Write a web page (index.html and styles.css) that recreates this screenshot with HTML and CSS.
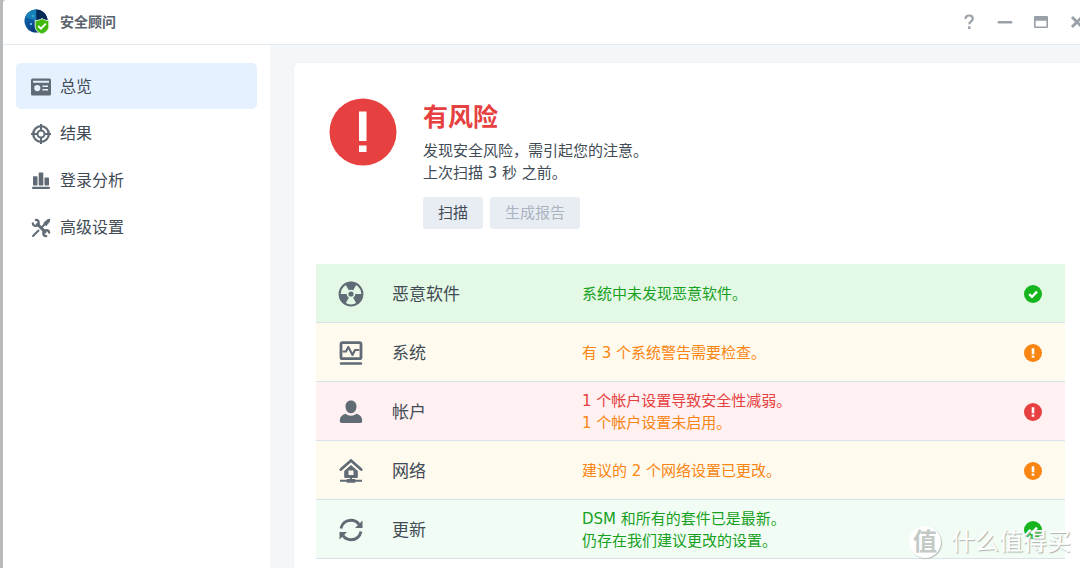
FILE: index.html
```html
<!DOCTYPE html>
<html lang="zh-CN">
<head>
<meta charset="utf-8">
<meta name="viewport" content="width=device-width, initial-scale=1">
<title>安全顾问</title>
<link rel="stylesheet" href="styles.css">
</head>
<body>
<svg class="defs" aria-hidden="true">
  <symbol id="ok" viewBox="0 0 18 18"><circle cx="9" cy="9" r="9" fill="#17b51d"/><path d="M5.2 9.2 8 11.8l5-5.2" fill="none" stroke="#fff" stroke-width="2.4"/></symbol>
  <symbol id="alert" viewBox="0 0 18 18"><circle cx="9" cy="9" r="9" fill="currentColor"/><path d="M7.7 4.3h2.6v6H7.7zM7.7 11.4h2.6v2.3H7.7z" fill="#fff"/></symbol>
</svg>
<div class="window">
  <header class="titlebar">
    <svg class="logo" viewBox="0 0 26 26" aria-hidden="true">
      <defs><linearGradient id="globe" x1="0" y1="0" x2="1" y2="1"><stop offset="0" stop-color="#0f6fb0"/><stop offset=".45" stop-color="#0b4f96"/><stop offset="1" stop-color="#041b45"/></linearGradient></defs>
      <circle cx="12" cy="12" r="11.5" fill="url(#globe)"/>
      <path d="M12 .5a11.5 11.5 0 0 1 11.500 11.500L12 12z" fill="#062a58"/>
      <path d="M12 12V.5C7 1 3 4 1.500 8z" fill="#1682b8"/>
      <path d="M.5 12h23M12 .5v23" stroke="#1c6fb0" stroke-width=".5" fill="none"/>
      <circle cx="7" cy="15" r="1" fill="#7fe3ff"/><circle cx="9" cy="7" r=".7" fill="#7fe3ff"/>
      <path d="M18 9.500c2 1.500 4 2 6.800 2v6c0 3.500-3 6-6.800 7.500-3.800-1.500-6.800-4-6.800-7.500v-6c2.800 0 4.800-.5 6.800-2z" fill="#3fba0c" stroke="#e3efdd"/>
      <path d="m14.200 17 2.800 2.700 4.800-5" fill="none" stroke="#fff" stroke-width="1.800"/>
    </svg>
    <h1 class="app-name">安全顾问</h1>
    <div class="controls">
      <button type="button" class="control" aria-label="帮助"><svg viewBox="0 0 16 16"><path d="M4.500 5c0-2.300 1.500-3.500 3.600-3.500s3.700 1.200 3.700 3.200c0 2.600-3.500 2.800-3.500 5.600" fill="none" stroke="currentColor" stroke-width="2.200"/><path d="M7.100 12.300h2.400V15H7.100z" fill="currentColor"/></svg></button>
      <button type="button" class="control" aria-label="最小化"><svg viewBox="0 0 16 16"><path d="M1.800 8.200h12.400" stroke="currentColor" stroke-width="2.400" stroke-linecap="round"/></svg></button>
      <button type="button" class="control" aria-label="最大化"><svg viewBox="0 0 16 16"><path fill-rule="evenodd" d="M2 2h12a1 1 0 0 1 1 1v10a1 1 0 0 1-1 1H2a1 1 0 0 1-1-1V3a1 1 0 0 1 1-1zm.6 4.800v5.700h10.800V6.800z" fill="currentColor"/></svg></button>
      <button type="button" class="control" aria-label="关闭"><svg viewBox="0 0 16 16"><path d="m3 3 10 10M13 3 3 13" stroke="currentColor" stroke-width="3"/></svg></button>
    </div>
  </header>
  <div class="body">
    <nav class="sidebar">
      <a class="nav-item active" href="#overview" aria-current="page">
        <svg class="nav-icon" viewBox="0 0 20 20"><path fill="currentColor" fill-rule="evenodd" d="M1.500 1.500h17A1.500 1.500 0 0 1 20 3v14a1.500 1.500 0 0 1-1.500 1.500h-17A1.500 1.500 0 0 1 0 17V3a1.500 1.500 0 0 1 1.500-1.500zM2 3.700v2h16v-2zM6.300 8a3.100 3.100 0 1 0 0 6.200 3.100 3.100 0 0 0 0-6.200zM11.500 8.500V10H17V8.500zm0 3.500v1.500H17V12z"/></svg>总览</a>
      <a class="nav-item" href="#results">
        <svg class="nav-icon" viewBox="0 0 20 20"><g fill="none" stroke="currentColor"><circle cx="10" cy="10" r="7.800" stroke-width="2.300"/><circle cx="10" cy="10" r="3.500" stroke-width="2"/><path d="M10 0v6.500M10 13.500V20M0 10h6.500M13.500 10H20" stroke-width="2"/></g></svg>结果</a>
      <a class="nav-item" href="#login-analysis">
        <svg class="nav-icon" viewBox="0 0 20 20"><g fill="currentColor"><rect x="2" y="5.300" width="4.500" height="9.200" rx=".8"/><rect x="7.700" y="1.600" width="4.600" height="12.900" rx=".8"/><rect x="13.500" y="6.500" width="4.500" height="8" rx=".8"/><rect x="1" y="15.800" width="18" height="2.200" rx="1"/></g></svg>登录分析</a>
      <a class="nav-item" href="#advanced">
        <svg class="nav-icon" viewBox="0 0 20 20"><g fill="none" stroke="currentColor" stroke-linecap="round"><path d="m6.500 6.300 7.600 7.600" stroke-width="3"/><path d="M4.800 1.900a3 3 0 1 1-3 3.500" stroke-width="2.200"/><path d="M15.200 18.200a3 3 0 1 1 3-3.600" stroke-width="2.200"/><path d="m2 18 5.500-5.500M11.500 8.500l2-2" stroke-width="2"/></g><path d="m12.200 5 4.300-3.700 2.800-.5-.5 2.900L15.200 8.200z" fill="currentColor"/></svg>高级设置</a>
    </nav>
    <main class="content">
      <section class="card">
        <div class="summary">
          <svg class="summary-icon" viewBox="0 0 68 68" aria-hidden="true"><circle cx="34" cy="34" r="33.500" fill="#e64040"/><path d="M30 13.500h7.500V43H30zM30 47.500h7.500v6.500H30z" fill="#fff"/></svg>
          <div>
            <h2 class="summary-title">有风险</h2>
            <p class="summary-text">发现安全风险，需引起您的注意。</p>
            <p class="summary-text">上次扫描 3 秒 之前。</p>
            <div class="actions">
              <button type="button" class="btn">扫描</button>
              <button type="button" class="btn" disabled>生成报告</button>
            </div>
          </div>
        </div>
        <table class="checks">
          <colgroup><col class="col-icon"><col class="col-name"><col><col class="col-status"></colgroup>
          <tbody>
            <tr class="row-safe">
              <td class="cell-icon"><svg viewBox="0 0 26 26"><circle cx="13" cy="13" r="11.400" fill="none" stroke="currentColor" stroke-width="2"/><circle cx="13" cy="13" r="2.600" fill="currentColor"/><path d="M10.800 9.300 7 2.500A12 12 0 0 1 19 2.500L15.200 9.300a4.300 4.300 0 0 0-4.400 0zM8.700 13H1A12 12 0 0 0 7 23.500l3.800-6.800A4.300 4.300 0 0 1 8.700 13zM17.300 13H25a12 12 0 0 1-6 10.500l-3.800-6.800a4.300 4.300 0 0 0 2.100-3.700z" fill="currentColor"/></svg></td>
              <th scope="row">恶意软件</th>
              <td class="good">系统中未发现恶意软件。</td>
              <td class="cell-status good"><svg role="img" aria-label="安全"><use href="#ok"/></svg></td>
            </tr>
            <tr class="row-warning">
              <td class="cell-icon"><svg viewBox="0 0 26 26"><g fill="none" stroke="currentColor" stroke-linecap="round" stroke-linejoin="round"><rect x="3" y="2.700" width="20" height="16" rx="1.500" stroke-width="2.800"/><path d="M5.500 11.500H8l2.300-4.500 4.200 8 2.500-5h3.500" stroke-width="2.100"/><path d="M3 23.500h20" stroke-width="2.400"/></g></svg></td>
              <th scope="row">系统</th>
              <td class="warn">有 3 个系统警告需要检查。</td>
              <td class="cell-status warn"><svg role="img" aria-label="警告"><use href="#alert"/></svg></td>
            </tr>
            <tr class="row-danger">
              <td class="cell-icon"><svg viewBox="0 0 26 26"><path d="M13 1.500c3.300 0 5.500 2.500 5.500 6s-2.200 6.700-5.500 6.700-5.500-3.200-5.500-6.700 2.200-6 5.500-6zM7.500 14.800c3.200 2.600 7.800 2.600 11 0 3.500 1 5.700 3.200 5.700 7.200 0 1.300-.7 2-2 2H3.800c-1.300 0-2-.7-2-2 0-4 2.200-6.200 5.700-7.200z" fill="currentColor"/></svg></td>
              <th scope="row">帐户</th>
              <td><p class="bad">1 个帐户设置导致安全性减弱。</p><p class="warn">1 个帐户设置未启用。</p></td>
              <td class="cell-status bad"><svg role="img" aria-label="危险"><use href="#alert"/></svg></td>
            </tr>
            <tr class="row-warning">
              <td class="cell-icon"><svg viewBox="0 0 26 26"><path d="m2.800 11.500 10.200-9 10.200 9" fill="none" stroke="currentColor" stroke-width="2.800" stroke-linecap="round"/><path fill="currentColor" fill-rule="evenodd" d="m13 7 6.800 6v6a1 1 0 0 1-1 1H7.200a1 1 0 0 1-1-1v-6zM10.500 12.500V17h5v-4.500z"/><path d="M12 19h2v2h2.500a1 1 0 0 1 1 .8H24v2h-6.500a1 1 0 0 1-1 1h-7a1 1 0 0 1-1-1H2v-2h6.500a1 1 0 0 1 1-.8H12z" fill="currentColor"/></svg></td>
              <th scope="row">网络</th>
              <td class="warn">建议的 2 个网络设置已更改。</td>
              <td class="cell-status warn"><svg role="img" aria-label="警告"><use href="#alert"/></svg></td>
            </tr>
            <tr class="row-updated">
              <td class="cell-icon"><svg viewBox="0 0 26 26"><g fill="none" stroke="currentColor" stroke-width="3"><path d="M3 11.500C4 6.500 8 3.300 13 3.300c3.400 0 6.200 1.500 8 4"/><path d="M23 14.500c-1 5-5 8.200-10 8.200-3.400 0-6.200-1.500-8-4"/></g><path d="M24.500 3.500V11H17zM1.500 22.500V15H9z" fill="currentColor"/></svg></td>
              <th scope="row">更新</th>
              <td class="good"><p>DSM 和所有的套件已是最新。</p><p>仍存在我们建议更改的设置。</p></td>
              <td class="cell-status good"><svg role="img" aria-label="安全"><use href="#ok"/></svg></td>
            </tr>
          </tbody>
        </table>
      </section>
    </main>
  </div>
</div>
<div class="watermark"><span class="watermark-badge">值</span><span>什么值得买</span></div>
</body>
</html>
```
FILE: styles.css
```css
* {
  box-sizing: border-box;
}

body {
  margin: 0;
  overflow: hidden;
  background: #b9babb;
  color: #414b55;
  font: 15px/22px "DejaVu Sans", "Noto Sans CJK SC", sans-serif;
}

h1, h2, p {
  margin: 0;
}

button {
  border: 0;
  font: inherit;
}

.defs {
  position: absolute;
  width: 0;
  height: 0;
}

.window {
  display: flex;
  flex-direction: column;
  min-height: 100vh;
  margin-left: 3px;
  background: #fff;
  border-top-left-radius: 3px;
}

.titlebar {
  display: flex;
  align-items: center;
  height: 45px;
  padding-left: 21px;
  border-bottom: 1px solid #e3eaf0;
}

.logo {
  width: 26px;
  height: 26px;
}

.app-name {
  margin-left: 10px;
  color: #59636d;
  font-size: 14px;
  font-weight: 700;
}

.controls {
  display: flex;
  gap: 20px;
  margin: 0 -5px 0 auto;
}

.control {
  display: flex;
  padding: 0;
  background: none;
  color: #99a0a8;
}

.control svg {
  width: 16px;
  height: 16px;
}

.body {
  display: flex;
  flex: 1;
}

.sidebar {
  display: flex;
  flex: 0 0 267px;
  flex-direction: column;
  gap: 1px;
  padding: 18px 13px;
}

.nav-item {
  display: flex;
  align-items: center;
  gap: 9px;
  height: 46px;
  padding: 1px 0 0 15px;
  border-radius: 5px;
  color: #414b55;
  font-size: 16px;
  text-decoration: none;
}

.nav-item.active {
  background: #e5f1fe;
}

.nav-icon {
  width: 20px;
  height: 20px;
  color: #606b75;
}

.content {
  display: flex;
  flex: 1;
  min-width: 0;
  padding: 18px 0 0 24px;
  background: #f3f7fa;
}

.card {
  flex: 1;
  min-width: 0;
  padding: 35px 15px 9px 22px;
  background: #fff;
  border-top-left-radius: 5px;
  box-shadow: 0 0 2px #dce5ee;
}

.summary {
  display: flex;
  gap: 26px;
  padding: 0 0 35px 13px;
}

.summary-icon {
  flex: none;
  width: 68px;
  height: 68px;
}

.summary-title {
  padding-top: 4px;
  margin-bottom: 6px;
  color: #e64040;
  font-size: 25px;
  line-height: 32px;
}

.actions {
  display: flex;
  gap: 7px;
  margin-top: 13px;
}

.btn {
  height: 32px;
  padding: 0 15px;
  border-radius: 3px;
  background: #e8edf4;
  color: #414b55;
}

.btn:disabled {
  color: #abb3bf;
}

.checks {
  width: 100%;
  border-spacing: 0;
  table-layout: fixed;
}

.col-icon {
  width: 76px;
}

.col-name {
  width: 190px;
}

.col-status {
  width: 64px;
}

.checks td,
.checks th {
  height: 59px;
  padding: 1px 0 0;
  border-bottom: 1px solid #d8e2eb;
  text-align: left;
  vertical-align: middle;
}

.checks th {
  font-size: 17px;
  font-weight: 400;
}

.checks svg {
  display: block;
}

.checks .cell-icon {
  padding-left: 22px;
  color: #606b75;
}

.cell-icon svg {
  width: 26px;
  height: 26px;
}

.cell-status svg {
  width: 18px;
  height: 18px;
  margin: 0 auto;
}

.row-safe {
  background: #e3f9e5;
}

.row-warning {
  background: #fffaee;
}

.row-danger {
  background: #fff0f1;
}

.row-updated {
  background: #f1fdf4;
}

.good {
  color: #18a01f;
}

.warn {
  color: #f98512;
}

.bad {
  color: #e64040;
}

.watermark {
  position: absolute;
  right: 9px;
  bottom: 10px;
  display: flex;
  align-items: center;
  gap: 10px;
  color: #fff;
  font-size: 24px;
  line-height: 32px;
  text-shadow: 1px 1px 1px #a9b2ac;
  pointer-events: none;
}

.watermark-badge {
  width: 32px;
  border-radius: 50%;
  background: #fff;
  box-shadow: 1px 1px 1px #b9c2bc;
  color: #c3c9c5;
  font-weight: 700;
  text-align: center;
  text-shadow: none;
}
```
